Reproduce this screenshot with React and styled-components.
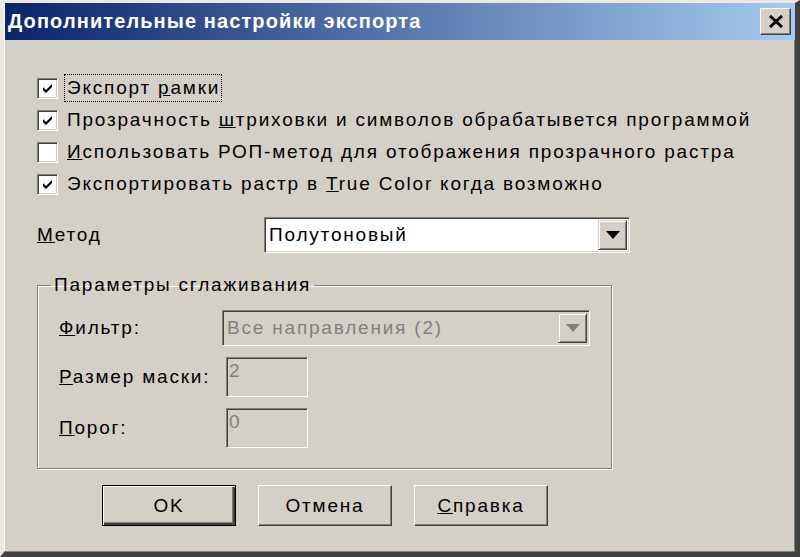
import { createGlobalStyle } from 'styled-components';
import styled from 'styled-components';

const GlobalStyle = createGlobalStyle`
	html, body {
		margin: 0;
		padding: 0;
		background: #d4d0c8;
	}
	body {
		font-family: 'Liberation Sans', Arial, sans-serif;
	}
`;

const Window = styled.div`
	width: 800px;
	height: 557px;
	box-sizing: border-box;
	background: #d4d0c8;
	border-style: solid;
	border-width: 3px 5px 5px 4px;
	border-color: #ece9e2 #404040 #404040 #ece9e2;
	box-shadow: inset -1px -1px 0 #808080, inset 1px 1px 0 #ffffff;
	display: flex;
	flex-direction: column;
	color: #000;
	font-size: 19px;
	letter-spacing: 1.8px;
`;

const TitleBar = styled.div`
	height: 37px;
	margin: 0 0 0 1px;
	background: linear-gradient(to right, #0a246a, #a6caf0);
	display: flex;
	align-items: center;
	justify-content: space-between;
	padding: 0 4px 0 3px;
`;

const Title = styled.span`
	color: #fff;
	font-weight: bold;
	font-size: 20px;
	letter-spacing: 1.1px;
`;

const CloseButton = styled.div`
	width: 31px;
	height: 27px;
	box-sizing: border-box;
	background: #d4d0c8;
	border: 1px solid;
	border-color: #fff #404040 #404040 #fff;
	box-shadow: inset -1px -1px 0 #808080;
	display: flex;
	align-items: center;
	justify-content: center;
`;

const Body = styled.div`
	padding: 32px 0 0 33px;
	display: flex;
	flex-direction: column;
`;

const CheckRow = styled.div`
	height: 32px;
	display: flex;
	align-items: center;
	gap: 6px;
`;

const Box = styled.div`
	width: 21px;
	height: 21px;
	box-sizing: border-box;
	background: #fff;
	border: 1px solid;
	border-color: #808080 #fff #fff #808080;
	box-shadow: inset 1px 1px 0 #404040, inset -1px -1px 0 #d4d0c8;
	display: flex;
	align-items: center;
	justify-content: center;
`;

const Label = styled.span`
	padding: 2px 1px 2px 2px;
	border: 1px ${(p) => (p.$focus ? 'dotted #000' : 'solid transparent')};
	white-space: nowrap;
`;

const MethodRow = styled.div`
	margin-top: 17px;
	display: flex;
	align-items: center;
`;

const MethodLabel = styled.span`
	width: 227px;
`;

const Combo = styled.div`
	width: ${(p) => p.$w}px;
	height: ${(p) => p.$h}px;
	box-sizing: border-box;
	background: ${(p) => (p.$disabled ? '#d4d0c8' : '#fff')};
	border: 1px solid;
	border-color: #808080 #fff #fff #808080;
	box-shadow: inset 1px 1px 0 #404040, inset -1px -1px 0 #d4d0c8;
	display: flex;
	align-items: center;
	justify-content: space-between;
	padding: 2px 2px 2px 4px;
	color: ${(p) => (p.$disabled ? '#808080' : '#000')};
`;

const DropButton = styled.div`
	width: 29px;
	align-self: stretch;
	box-sizing: border-box;
	background: #d4d0c8;
	border: 1px solid;
	border-color: #d4d0c8 #404040 #404040 #d4d0c8;
	box-shadow: inset 1px 1px 0 #fff, inset -1px -1px 0 #808080;
	display: flex;
	align-items: center;
	justify-content: center;
`;

const Group = styled.fieldset`
	margin: 22px 0 0 0;
	width: 575px;
	height: 194px;
	box-sizing: border-box;
	border: 1px solid #808080;
	box-shadow: 1px 1px 0 #fff, inset 1px 1px 0 #fff;
	padding: 15px 0 0 21px;
	display: grid;
	grid-template-columns: 163px auto;
	grid-auto-rows: min-content;
	align-items: center;
	row-gap: 11px;
`;

const Legend = styled.legend`
	margin-left: -8px;
	padding: 0 3px 0 3px;
	line-height: 20px;
`;

const Edit = styled.div`
	width: 82px;
	height: 40px;
	margin-left: 4px;
	box-sizing: border-box;
	background: #d4d0c8;
	border: 1px solid;
	border-color: #808080 #fff #fff #808080;
	box-shadow: inset 1px 1px 0 #404040, inset -1px -1px 0 #d4d0c8;
	padding: 3px 2px;
	color: #808080;
	line-height: 20px;
`;

const ButtonRow = styled.div`
	margin: 16px 0 0 65px;
	display: flex;
	gap: 22px;
`;

const Button = styled.div`
	width: 134px;
	height: 41px;
	box-sizing: border-box;
	background: #d4d0c8;
	border: 1px solid;
	border-color: ${(p) => (p.$default ? '#000' : '#fff #404040 #404040 #fff')};
	box-shadow: ${(p) =>
		p.$default
			? 'inset 1px 1px 0 #fff, inset -2px -2px 0 #404040, inset -3px -3px 0 #808080'
			: 'inset -1px -1px 0 #808080'};
	display: flex;
	align-items: center;
	justify-content: center;
`;

const Check = () => (
	<svg width="11" height="10" viewBox="0 0 11 10">
		<path d="M1 4 L4 7 L10 1 L10 4 L4 10 L1 7 Z" fill="#000" />
	</svg>
);

const Arrow = ({ color }) => (
	<svg width="14" height="8" viewBox="0 0 14 8">
		<path d="M0 0 H14 L7 8 Z" fill={color} />
	</svg>
);

const options = [
	{ checked: true, focus: true, text: <>Экспорт <u>р</u>амки</> },
	{ checked: true, text: <>Прозрачность <u>ш</u>триховки и символов обрабатывется программой</> },
	{ checked: false, text: <><u>И</u>спользовать РОП-метод для отображения прозрачного растра</> },
	{ checked: true, text: <>Экспортировать растр в <u>T</u>rue Color когда возможно</> },
];

const App = () => (
	<>
		<GlobalStyle />
		<Window>
			<TitleBar>
				<Title>Дополнительные настройки экспорта</Title>
				<CloseButton>
					<svg width="14" height="13" viewBox="0 0 14 13">
						<path d="M1 1 L13 12 M13 1 L1 12" stroke="#000" strokeWidth="3" />
					</svg>
				</CloseButton>
			</TitleBar>
			<Body>
				{options.map((o, i) => (
					<CheckRow key={i}>
						<Box>{o.checked && <Check />}</Box>
						<Label $focus={o.focus}>{o.text}</Label>
					</CheckRow>
				))}
				<MethodRow>
					<MethodLabel>
						<u>М</u>етод
					</MethodLabel>
					<Combo $w={366} $h={36}>
						<span>Полутоновый</span>
						<DropButton>
							<Arrow color="#000" />
						</DropButton>
					</Combo>
				</MethodRow>
				<Group>
					<Legend>Параметры сглаживания</Legend>
					<span>
						<u>Ф</u>ильтр:
					</span>
					<Combo $w={368} $h={36} $disabled>
						<span>Все направления (2)</span>
						<DropButton>
							<Arrow color="#808080" />
						</DropButton>
					</Combo>
					<span>
						<u>Р</u>азмер маски:
					</span>
					<Edit>2</Edit>
					<span>
						<u>П</u>орог:
					</span>
					<Edit>0</Edit>
				</Group>
				<ButtonRow>
					<Button $default>OK</Button>
					<Button>Отмена</Button>
					<Button>
						<span>
							<u>С</u>правка
						</span>
					</Button>
				</ButtonRow>
			</Body>
		</Window>
	</>
);

export default App;
